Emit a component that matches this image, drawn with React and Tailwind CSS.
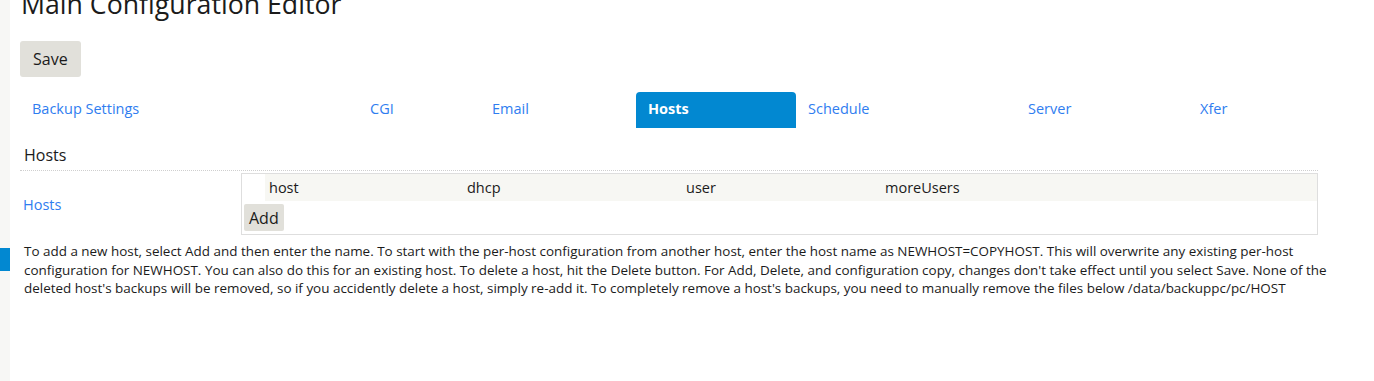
import React from 'react';

const tabs = [
  { name: 'Backup Settings', w: 'w-[338px]' },
  { name: 'CGI', w: 'w-[122px]' },
  { name: 'Email', w: 'w-[156px]' },
  { name: 'Hosts', w: 'w-[160px]', active: true },
  { name: 'Schedule', w: 'w-[220px]' },
  { name: 'Server', w: 'w-[172px]' },
  { name: 'Xfer', w: 'w-[130px]' },
];

const App = () => {
  return (
    <div className="flex h-[381px] w-[1374px] overflow-hidden bg-white font-['Open_Sans',sans-serif] text-[#1b1b1b]">
      {/* left sidebar edge */}
      <div className="w-[10px] shrink-0 bg-[#f7f7f5]">
        <div className="mt-[248px] h-[23px] bg-[#0288d1]"></div>
      </div>

      <div className="ml-[10px] w-[1298px]">
        <h1 className="-mt-[9px] pl-[1px] text-[26.7px] leading-[26px] font-normal">Main Configuration Editor</h1>

        <button className="mt-[24px] h-[36px] rounded-[3px] bg-[#e1e0da] px-[13px] text-[16px] leading-none">
          Save
        </button>

        <div className="mt-[15px] flex h-[36px]">
          {tabs.map((tab) => (
            <div
              key={tab.name}
              className={
                tab.active
                  ? `${tab.w} flex items-center rounded-t-[4px] bg-[#0288d1] pb-[2px] pl-[12px] text-[14.5px] font-bold text-white`
                  : `${tab.w} flex items-center pb-[2px] pl-[12px] text-[14.5px] text-[#2f7df0]`
              }
            >
              {tab.name}
            </div>
          ))}
        </div>

        <div className="mt-[17px] border-b border-dotted border-[#cfcfcf] pb-[5px] pl-[4px] text-[16px] leading-[20px]">
          Hosts
        </div>

        <div className="mt-[2px] flex">
          <div className="flex w-[221px] items-center pl-[3px] pt-[1px] text-[14.5px] text-[#2f7df0]">Hosts</div>
          <div className="flex-1 border border-[#dedede]">
            <div className="flex h-[27px] text-[14.5px]">
              <div className="w-[23px]"></div>
              <div className="flex flex-1 items-center bg-[#f7f7f3]">
                <div className="w-[198px] pl-[4px]">host</div>
                <div className="w-[219px] pl-[4px]">dhcp</div>
                <div className="w-[199px] pl-[4px]">user</div>
                <div className="pl-[4px]">moreUsers</div>
              </div>
            </div>
            <div className="pb-[3px] pl-[2px] pt-[3px]">
              <button className="h-[27px] rounded-[2px] bg-[#e1e0da] px-[5px] text-[16px] leading-none">Add</button>
            </div>
          </div>
        </div>

        <p className="mt-[7px] w-[1322px] pl-[4px] text-[13.45px] leading-[18.5px]">
          To add a new host, select Add and then enter the name. To start with the per-host configuration from another host,
          enter the host name as NEWHOST=COPYHOST. This will overwrite any existing per-host configuration for NEWHOST. You
          can also do this for an existing host. To delete a host, hit the Delete button. For Add, Delete, and configuration
          copy, changes don't take effect until you select Save. None of the deleted host's backups will be removed, so if you
          accidently delete a host, simply re-add it. To completely remove a host's backups, you need to manually remove the
          files below /data/backuppc/pc/HOST
        </p>
      </div>
    </div>
  );
};

export default App;
